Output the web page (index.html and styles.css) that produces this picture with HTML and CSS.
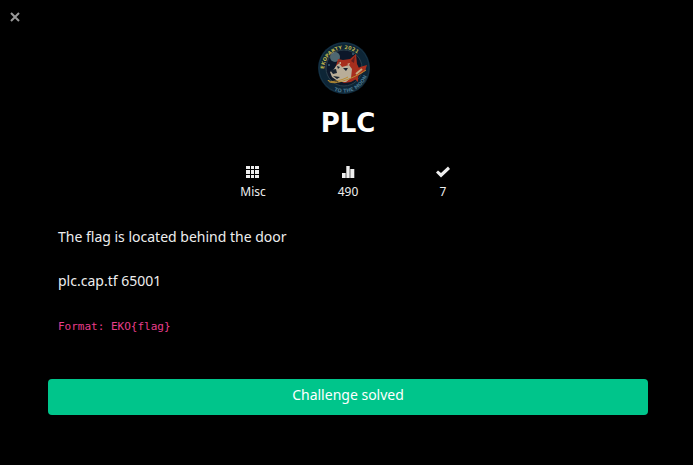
FILE: index.html
```html
<!DOCTYPE html>
<html lang="en">
<head>
<meta charset="utf-8">
<meta name="viewport" content="width=device-width, initial-scale=1">
<title>PLC</title>
<link rel="stylesheet" href="styles.css">
</head>
<body>
<header class="topbar">
  <button class="close" type="button" aria-label="Close">
    <svg viewBox="0 0 10 10" width="10" height="10"><path d="M1 1 9 9M9 1 1 9"/></svg>
  </button>
</header>
<main class="challenge">
  <svg class="logo" viewBox="0 0 54 54" width="54" height="54">
    <defs>
      <path id="arc-top" d="M9 37A20 20 0 0 1 46 20"/>
      <path id="arc-bottom" d="M14 48A25 25 0 0 0 51 32"/>
    </defs>
    <circle cx="27" cy="27" r="26" fill="#0d2536"/>
    <circle cx="27" cy="27" r="25" fill="none" stroke="#173345"/>
    <circle cx="27" cy="27" r="18" fill="#0c1729" stroke="#2c414d"/>
    <circle cx="18" cy="16" r="5" fill="#4f6871"/>
    <circle cx="12" cy="24" r="1" fill="#3d6275"/>
    <circle cx="36" cy="13" r="1" fill="#3d6275"/>
    <path fill="#a72e1d" d="M19 25 21 18 26 19 33 18 39 13 40 23 43 29 41 37 34 41 27 42 19 38 15 33 18 28Z"/>
    <path fill="#b9ad98" d="M19 25 22 22 25 26 32 24 35 28 34 37 29 41 22 41 15 36 13 31 17 28Z"/>
    <path fill="#641e1d" d="M22 19 23 22 21 23ZM38 15 37 22 34 20Z"/>
    <path fill="#d0bea0" d="M21 22 24 21 24 23ZM30 23 33 22 32 24Z"/>
    <path fill="#172230" d="M13 29 19 28 20 32 16 33ZM20 25 23 26 21 28ZM26 27 31 27 29 30ZM16 35 23 36 20 38Z"/>
    <path fill="#a92f1d" d="M36 32 43 26 50 24 48 30 41 35 41 41 36 36Z"/>
    <path d="M39 33 45 28" stroke="#c6ac80" stroke-width="2"/>
    <path d="M11 39C13 46 36 38 49 29M11 39C12 42 24 40 31 36" fill="none" stroke="#b98d31"/>
    <text class="logo-name"><textPath href="#arc-top" startOffset="50%">EKOPARTY 2021</textPath></text>
    <text class="logo-motto"><textPath href="#arc-bottom" startOffset="50%">TO THE MOON</textPath></text>
  </svg>
  <h1 class="title">PLC</h1>
  <ul class="stats">
    <li class="stat">
      <svg viewBox="0 0 14 14" width="14" height="14"><path d="M0 1h4v3H0zM5 1h3v3H5zM9 1h4v3H9zM0 5h4v4H0zM5 5h3v4H5zM9 5h4v4H9zM0 10h4v3H0zM5 10h3v3H5zM9 10h4v3H9z"/></svg>
      <span>Misc</span>
    </li>
    <li class="stat">
      <svg viewBox="0 0 14 14" width="14" height="14"><path d="M1 8h3.700v5H1zM5.300 1h3.400v12H5.300zM9.300 4h4v9h-4z"/></svg>
      <span>490</span>
    </li>
    <li class="stat">
      <svg viewBox="0 0 14 14" width="14" height="14"><path d="M0 7.500 2 5.500 5 8 12 1.500 14 4 5 12.500Z"/></svg>
      <span>7</span>
    </li>
  </ul>
  <div class="description">
    <p>The flag is located behind the door</p>
    <p>plc.cap.tf 65001</p>
    <p><code>Format: EKO{flag}</code></p>
  </div>
  <button class="solved" type="button">Challenge solved</button>
</main>
</body>
</html>
```
FILE: styles.css
```css
* {
  box-sizing: border-box;
}

body {
  margin: 0;
  background: #000;
  color: #eee;
  font: 14px/20px "Noto Sans", sans-serif;
}

.topbar {
  display: flex;
  padding: 12px 10px;
}

.close {
  display: flex;
  padding: 0;
  border: 0;
  background: none;
}

.close path {
  stroke: #999;
  stroke-width: 2;
}

.challenge {
  display: flex;
  flex-direction: column;
  align-items: center;
  padding: 7px 45px 50px 48px;
}

.logo {
  margin-right: 8px;
}

.logo-name,
.logo-motto {
  font: bold 5px "DejaVu Sans", sans-serif;
  text-anchor: middle;
}

.logo-name {
  fill: #beb24c;
}

.logo-motto {
  fill: #48758c;
}

.title {
  margin: 12px 0 0;
  color: #fff;
  font: bold 26px/32px "DejaVu Sans", sans-serif;
}

.stats {
  display: flex;
  margin: 26px 0 0;
  padding: 0;
  list-style: none;
}

.stat {
  display: flex;
  flex-direction: column;
  align-items: center;
  gap: 3px;
  width: 95px;
  font-size: 12px;
}

.stat svg {
  fill: #eee;
}

.description {
  align-self: stretch;
  padding: 25px 10px 0;
}

.description p {
  margin: 0 0 24px;
}

.description code {
  color: #e83e8c;
  font: 11px/20px "DejaVu Sans Mono", monospace;
}

.solved {
  align-self: stretch;
  height: 36px;
  margin-top: 18px;
  padding: 0 0 4px;
  border: 0;
  border-radius: 4px;
  background: #00c58b;
  color: #fff;
  font: inherit;
}
```
